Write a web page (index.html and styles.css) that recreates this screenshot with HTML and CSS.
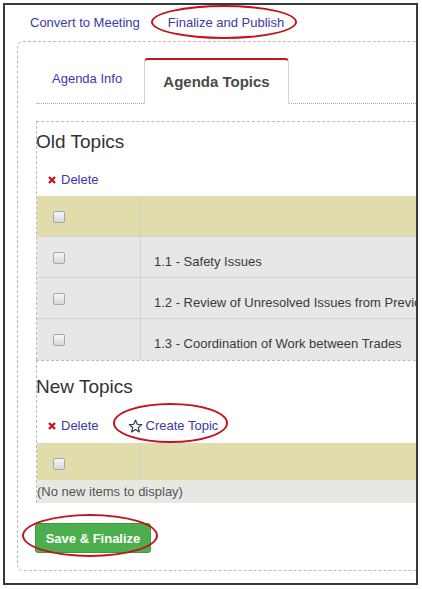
FILE: index.html
```html
<!DOCTYPE html>
<html lang="en">
<head>
    <meta charset="UTF-8">
    <title>Agenda Topics</title>
    <link rel="stylesheet" href="styles.css">
</head>
<body>
<!--外框：截图的深色边框-->
<div class="frame">
    <div class="actions">
        <a class="action">Convert to Meeting</a>
        <a class="action circled circled-top">Finalize and Publish</a>
    </div>

    <div class="panel">
        <!--选项卡-->
        <div class="tabs">
            <div class="tab">Agenda Info</div>
            <div class="tab tab-active">Agenda Topics</div>
            <div class="tab-fill"></div>
        </div>

        <!--旧议题-->
        <div class="section section-old">
            <h2>Old Topics</h2>
            <div class="toolbar">
                <a class="tool">
                    <svg class="icon-x" width="8" height="8" viewBox="0 0 8 8"><path d="M1 1L7 7M7 1L1 7"/></svg>
                    Delete
                </a>
            </div>
            <div class="grid">
                <div class="row row-head">
                    <div class="cell-check"><span class="check"></span></div>
                    <div class="cell-title"></div>
                </div>
                <div class="row">
                    <div class="cell-check"><span class="check"></span></div>
                    <div class="cell-title">1.1 - Safety Issues</div>
                </div>
                <div class="row">
                    <div class="cell-check"><span class="check"></span></div>
                    <div class="cell-title">1.2 - Review of Unresolved Issues from Previous Meeting</div>
                </div>
                <div class="row row-last">
                    <div class="cell-check"><span class="check"></span></div>
                    <div class="cell-title">1.3 - Coordination of Work between Trades</div>
                </div>
            </div>
        </div>

        <!--新议题-->
        <div class="section section-new">
            <h2>New Topics</h2>
            <div class="toolbar">
                <a class="tool">
                    <svg class="icon-x" width="8" height="8" viewBox="0 0 8 8"><path d="M1 1L7 7M7 1L1 7"/></svg>
                    Delete
                </a>
                <a class="tool circled circled-create">
                    <svg class="icon-star" width="15" height="15" viewBox="0 0 16 16"><path d="M8 1.2L9.9 5.6L14.6 6L11 9.1L12.1 13.8L8 11.3L3.9 13.8L5 9.1L1.4 6L6.1 5.6Z"/></svg>
                    Create Topic
                </a>
            </div>
            <div class="grid">
                <div class="row row-head row-short">
                    <div class="cell-check"><span class="check"></span></div>
                    <div class="cell-title"></div>
                </div>
                <div class="empty">(No new items to display)</div>
            </div>
        </div>

        <button class="btn-save circled circled-save">Save &amp; Finalize</button>
    </div>
</div>
</body>
</html>
```

FILE: styles.css
```css
/*基础设置*/
html, body {
    margin: 0;
    padding: 0;
    background: white;
    font-family: "Liberation Sans", Arial, sans-serif;
}

/*外框*/
.frame {
    margin: 3px;
    width: 415px;
    height: 582px;
    box-sizing: border-box;
    border: 2px solid #3a3a3a;
    overflow: hidden;
    background: white;
}

/*顶部链接*/
.actions {
    display: flex;
    gap: 28px;
    padding: 10px 0 10px 25px;
    font-size: 13px;
    line-height: 16px;
}

.action, .tool {
    color: #3a3aa8;
    text-decoration: none;
}

/*红色椭圆标注*/
.circled {
    position: relative;
}

.circled::after {
    content: '';
    position: absolute;
    border: 2px solid #c0141e;
    border-radius: 50%;
    pointer-events: none;
}

.circled-top::after {
    top: -10px;
    bottom: -8px;
    left: -17px;
    right: -13px;
}

.circled-create::after {
    top: -15px;
    bottom: -9px;
    left: -15px;
    right: -10px;
}

.circled-save::after {
    top: -10px;
    bottom: -5px;
    left: -14px;
    right: -8px;
}

/*面板*/
.panel {
    margin-left: 12px;
    width: 460px;
    padding: 16px 0 17px 18px;
    border: 1px dashed #bbb;
    border-radius: 6px;
}

/*选项卡*/
.tabs {
    display: flex;
    align-items: flex-end;
}

.tab {
    box-sizing: border-box;
    height: 46px;
    width: 108px;
    padding: 13px 0 0 16px;
    font-size: 13px;
    line-height: 16px;
    color: #3a3aa8;
    border-bottom: 1px dotted #aaa;
}

.tab-active {
    width: 145px;
    padding: 13px 0 0;
    text-align: center;
    font-size: 15px;
    line-height: 18px;
    font-weight: bold;
    color: #4a4a4a;
    border: 1px dotted #aaa;
    border-top: 2px solid #c0141e;
    border-bottom: 1px solid white;
    border-radius: 4px 4px 0 0;
}

.tab-fill {
    flex: 1;
    height: 46px;
    box-sizing: border-box;
    border-bottom: 1px dotted #aaa;
}

/*议题区块*/
.section {
    border-left: 1px dashed #bbb;
    border-top: 1px dashed #bbb;
}

.section-old {
    margin-top: 17px;
}

.section h2 {
    margin: 9px 0 0 -1px;
    font-size: 19px;
    line-height: 22px;
    font-weight: normal;
    color: #333;
}

.section-new h2 {
    margin-top: 15px;
}

.toolbar {
    display: flex;
    align-items: center;
    gap: 29px;
    padding: 19px 0 8px 11px;
    font-size: 13px;
    line-height: 16px;
}

.section-new .toolbar {
    padding: 20px 0 9px 11px;
}

.tool {
    display: flex;
    align-items: center;
    gap: 5px;
}

.icon-x path {
    stroke: #c8161e;
    stroke-width: 2.4;
    fill: none;
}

.icon-star path {
    stroke: #2f3a4a;
    stroke-width: 1.3;
    stroke-linejoin: round;
    fill: none;
}

.circled-create {
    gap: 3px;
}

/*表格*/
.row {
    display: grid;
    grid-template-columns: 104px 1fr;
    height: 41px;
    box-sizing: border-box;
    background: #e7e7e7;
    border-bottom: 1px solid #d2d2d2;
    font-size: 13px;
    line-height: 16px;
    color: #3a3a3a;
    white-space: nowrap;
}

.row-head {
    background: #e0dcab;
}

.row-short {
    height: 37px;
    border-bottom: none;
}

.row-last {
    border-bottom: none;
}

.cell-check {
    border-right: 1px solid #d2d2d2;
    padding: 15px 0 0 16px;
}

.cell-title {
    padding: 17px 0 0 13px;
    overflow: hidden;
}

.check {
    display: block;
    width: 12px;
    height: 12px;
    box-sizing: border-box;
    border: 1px solid #a8a8a8;
    border-radius: 2px;
    background: linear-gradient(#f6f6f6, #d8d8d8);
}

.empty {
    padding: 4px 0 3px;
    font-size: 13px;
    line-height: 16px;
    color: #555;
    background: #e8e8e2;
}

/*保存按钮*/
.btn-save {
    display: block;
    margin: 20px 0 0 -1px;
    width: 116px;
    height: 30px;
    padding: 0;
    font-family: "Liberation Sans", Arial, sans-serif;
    font-size: 13px;
    font-weight: bold;
    color: white;
    background: #4cae4c;
    border: 1px solid #3f9a3f;
    border-radius: 3px;
}
```
